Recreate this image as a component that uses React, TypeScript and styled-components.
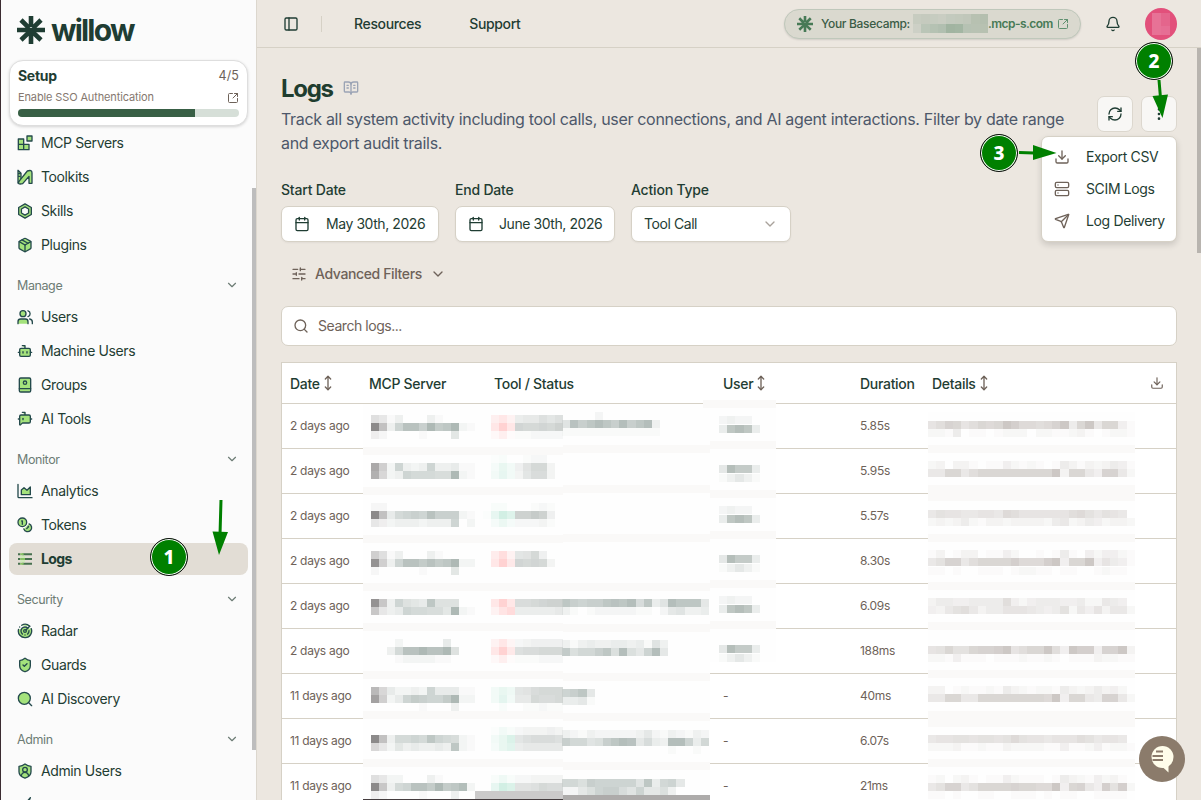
import type { ReactNode } from 'react'
import styled, { createGlobalStyle } from 'styled-components'
import {
    Bell,
    BookOpenText,
    Bot,
    BotMessageSquare,
    Calendar,
    ChevronDown,
    Download,
    EllipsisVertical,
    MoveVertical,
    Package,
    PanelLeft,
    Radar,
    RefreshCw,
    Search,
    Send,
    Server,
    ShieldCheck,
    SlidersHorizontal,
    SquareArrowOutUpRight,
} from 'lucide-react'

const GlobalStyle = createGlobalStyle`
    :root {
        --verde: #1f3d33;
        --marrom: #6e6259;
        --borda: #d6d1c6;
        --fundo: #ece7e0;
    }
    * {
        box-sizing: border-box;
    }
    body {
        margin: 0;
        overflow: hidden;
        background: var(--fundo);
        color: var(--verde);
        font-family: Inter, 'Liberation Sans', sans-serif;
        font-size: 14px;
    }
    svg {
        flex-shrink: 0;
    }
`

const PageStyled = styled.div`
    position: relative;
    display: flex;
    width: 1201px;
    height: 800px;
    overflow: hidden;
`

/* ---------- sidebar ---------- */

const SidebarStyled = styled.aside`
    position: relative;
    width: 257px;
    height: 800px;
    flex-shrink: 0;
    overflow: hidden;
    background: #fbfbfb;
    border-left: 1px solid #3b2c31;
    border-right: 1px solid #dcd7ce;
`
const LogoStyled = styled.div`
    display: flex;
    align-items: center;
    gap: 6px;
    height: 60px;
    padding-left: 16px;
`
const LogoTextStyled = styled.span`
    font-size: 30px;
    font-weight: 700;
    letter-spacing: -1.8px;
    line-height: 30px;
`
const SetupStyled = styled.section`
    height: 66px;
    margin: 0 8px 0 8px;
    padding: 6px 8px 0 8px;
    background: #ffffff;
    border: 1px solid #dedede;
    border-radius: 14px;
    box-shadow: 0 1px 3px rgba(0, 0, 0, 0.16);
`
const SetupRowStyled = styled.div<{ $height: number }>`
    display: flex;
    align-items: center;
    justify-content: space-between;
    height: ${({ $height }) => $height}px;
    color: var(--marrom);

    svg {
        margin-top: 2px;
    }
`
const SetupTitleStyled = styled.strong`
    margin-bottom: 1px;
    color: var(--verde);
    font-size: 14px;
    font-weight: 700;
    letter-spacing: -0.3px;
`
const SetupCountStyled = styled.span`
    font-size: 12.5px;
    line-height: 14px;
    letter-spacing: 0.1px;
`
const SetupHintStyled = styled.span`
    color: #85786f;
    font-size: 11px;
    letter-spacing: -0.13px;
`
const ProgressStyled = styled.div`
    height: 8px;
    overflow: hidden;
    background: #d6dfd8;
    border-radius: 4px;
`
const ProgressBarStyled = styled.div`
    width: 80%;
    height: 100%;
    background: #385f45;
`
const NavStyled = styled.nav`
    display: flex;
    flex-direction: column;
    gap: 2px;
    padding: 1px 8px 0;
`
const NavItemStyled = styled.a<{ $active?: boolean }>`
    display: flex;
    flex-shrink: 0;
    align-items: center;
    gap: 8px;
    height: 32px;
    padding: 0 8px;
    border-radius: 8px;
    background: ${({ $active }) => ($active ? '#e2ddd5' : 'transparent')};
    font-weight: ${({ $active }) => ($active ? 700 : 400)};
    letter-spacing: ${({ $active }) => ($active ? -0.6 : -0.38)}px;
`
const LabelStyled = styled.span`
    margin-bottom: 2px;
`
const NavGroupStyled = styled.div`
    display: flex;
    flex-shrink: 0;
    align-items: center;
    justify-content: space-between;
    height: 32px;
    margin: 6px 0 -2px;
    padding: 0 9px 0 8px;
    color: #6d7c75;
    font-size: 12.5px;
    letter-spacing: -0.4px;
`
const SidebarThumbStyled = styled.div`
    position: absolute;
    top: 188px;
    right: 0;
    width: 4px;
    height: 562px;
    background: #bdbdbd;
`

/* ---------- top bar ---------- */

const MainStyled = styled.main`
    position: relative;
    flex: 1;
    min-width: 0;
`
const TopBarStyled = styled.header`
    display: flex;
    align-items: center;
    height: 48px;
    padding: 0 24px 0 26px;
    border-bottom: 1px solid var(--borda);
`
const TopDividerStyled = styled.span`
    width: 1px;
    height: 16px;
    margin: 0 32px 0 22px;
    background: var(--borda);
`
const TopLinkStyled = styled.a`
    margin-right: 48px;
    font-weight: 500;
    letter-spacing: -0.36px;
`
const BasecampStyled = styled.div`
    display: flex;
    align-items: center;
    width: 297px;
    height: 30px;
    margin-left: auto;
    padding: 0 8px 0 12px;
    background: #dad9cf;
    border: 1px solid #bfc8bb;
    border-radius: 15px;
    box-shadow: 0 1px 2px rgba(0, 0, 0, 0.12);
    color: #3a5c46;
    font-size: 12px;
    font-weight: 500;
    white-space: nowrap;
`
const BasecampLabelStyled = styled.span`
    flex-shrink: 0;
    width: 92px;
    margin-left: 8px;
    letter-spacing: -0.32px;
`
const BasecampHostStyled = styled.span`
    flex-shrink: 0;
    width: 64px;
    margin-right: 5px;
    color: #477a56;
    font-weight: 600;
    letter-spacing: -0.55px;
`
const BellStyled = styled.span`
    display: flex;
    margin: 0 24px 0 24px;
`
const AvatarStyled = styled.div`
    display: flex;
    align-items: center;
    justify-content: center;
    width: 32px;
    height: 32px;
    overflow: hidden;
    background: #e2507b;
    border-radius: 50%;
`

/* ---------- content ---------- */

const ContentStyled = styled.div`
    padding: 26px 24px 0;
`
const HeadingStyled = styled.div`
    display: flex;
    justify-content: space-between;
    height: 82px;
`
const TitleStyled = styled.h1`
    display: flex;
    align-items: center;
    gap: 10px;
    height: 28px;
    margin: 0 0 5px;
    font-size: 24px;
    font-weight: 700;
    letter-spacing: -1.3px;
    color: #1f3d2f;
`
const DescriptionStyled = styled.p`
    margin: 0;
    color: #4d586a;
    font-size: 16px;
    line-height: 24px;
    letter-spacing: -0.32px;
    white-space: nowrap;
`
const ActionsStyled = styled.div`
    display: flex;
    gap: 8px;
    margin-top: 22px;
`
const IconButtonStyled = styled.button`
    display: flex;
    align-items: center;
    justify-content: center;
    width: 36px;
    height: 36px;
    padding: 0;
    background: #f8f7f5;
    border: 1px solid #dcd7ce;
    border-radius: 7px;
    color: var(--verde);
`
const FiltersStyled = styled.div`
    display: flex;
    gap: 16px;
    margin-top: 26px;
`
const FieldStyled = styled.label<{ $width: number }>`
    display: flex;
    flex-direction: column;
    gap: 8px;
    width: ${({ $width }) => $width}px;
    line-height: 16px;
    font-weight: 500;
    letter-spacing: -0.2px;
`
const FieldBoxStyled = styled.span<{ $gap: number }>`
    display: flex;
    align-items: center;
    gap: ${({ $gap }) => $gap}px;
    height: 36px;
    padding: 0 12px;
    background: #ffffff;
    border: 1px solid var(--borda);
    border-radius: 7px;
    box-shadow: 0 1px 2px rgba(0, 0, 0, 0.05);
    font-weight: 400;
    letter-spacing: -0.43px;
    white-space: nowrap;

    > svg:last-child:not(:first-child) {
        margin-left: auto;
    }
`
const AdvancedStyled = styled.div`
    display: flex;
    align-items: center;
    gap: 8px;
    height: 36px;
    margin: 14px 0;
    padding-left: 10px;
    color: var(--marrom);
    font-weight: 500;
    letter-spacing: -0.38px;
`
const SearchStyled = styled.div`
    display: flex;
    align-items: center;
    gap: 9px;
    height: 40px;
    padding-left: 11px;
    background: #ffffff;
    border: 1px solid var(--borda);
    border-radius: 7px;
    color: var(--marrom);
    letter-spacing: -0.45px;
`
const TableStyled = styled.div`
    position: relative;
    height: 460px;
    margin-top: 16px;
    background: #ffffff;
    border: 1px solid var(--borda);
    border-bottom: 0;
`
const TableRowStyled = styled.div<{ $head?: boolean }>`
    display: grid;
    grid-template-columns: 79px 125px 229px 137px 72px 208px 1fr;
    align-items: center;
    height: ${({ $head }) => ($head ? 41 : 45)}px;
    padding: ${({ $head }) => ($head ? '0 0 0 8px' : '0 0 2px 8px')};
    border-bottom: 1px solid var(--borda);
    color: ${({ $head }) => ($head ? 'var(--verde)' : 'var(--marrom)')};
    font-size: ${({ $head }) => ($head ? 14 : 12)}px;
    font-weight: ${({ $head }) => ($head ? 500 : 400)};
    letter-spacing: -0.3px;
    white-space: nowrap;
`
const CellStyled = styled.span`
    display: flex;
    align-items: center;

    svg {
        color: var(--marrom);
    }
`
const ExportCellStyled = styled(CellStyled)`
    justify-content: flex-end;
    padding-right: 12px;
`

/* ---------- floating parts ---------- */

const MenuStyled = styled.ul`
    position: absolute;
    top: 136px;
    left: 784px;
    width: 136px;
    height: 106px;
    margin: 0;
    padding: 4px 0;
    background: #ffffff;
    border: 1px solid var(--borda);
    border-radius: 7px;
    box-shadow: 0 3px 6px rgba(0, 0, 0, 0.14);
    list-style: none;
`
const MenuItemStyled = styled.li`
    display: flex;
    align-items: center;
    gap: 16px;
    height: 32px;
    padding-left: 12px;
    letter-spacing: -0.36px;
    white-space: nowrap;

    svg {
        color: var(--marrom);
    }
`
const PageThumbStyled = styled.div`
    position: absolute;
    top: 48px;
    right: 0;
    width: 4px;
    height: 205px;
    background: #b8b4af;
`
const ChatStyled = styled.button`
    position: absolute;
    top: 736px;
    left: 882px;
    display: flex;
    align-items: center;
    justify-content: center;
    width: 46px;
    height: 46px;
    padding: 0;
    background: #8b7b6b;
    border: 0;
    border-radius: 50%;
`
const MosaicStyled = styled.svg`
    position: absolute;
    top: -1px;
    left: -1px;
`
const ArrowsStyled = styled.svg`
    position: absolute;
    top: 0;
    left: 0;
    pointer-events: none;
`
const StepStyled = styled.div<{ $x: number; $y: number }>`
    position: absolute;
    top: ${({ $y }) => $y - 19}px;
    left: ${({ $x }) => $x - 19}px;
    display: flex;
    align-items: center;
    justify-content: center;
    width: 38px;
    height: 38px;
    background: #008000;
    border: 1px solid #111111;
    border-radius: 50%;
    box-shadow: inset 0 0 0 1px #ffffff;
    color: #ffffff;
    font-family: 'Noto Sans', 'DejaVu Sans', sans-serif;
    font-size: 19px;
    font-weight: 800;
    line-height: 1;
`

/* ---------- icons ---------- */

const lime = '#a4e27c'
const ink = '#244a4c'

function Duo({ children }: { children: ReactNode }) {
    return (
        <svg width="16" height="16" viewBox="0 0 24 24" fill={lime} stroke={ink} strokeWidth="2" strokeLinecap="round" strokeLinejoin="round">
            {children}
        </svg>
    )
}

function LogoMark({ size, color }: { size: number; color: string }) {
    return (
        <svg width={size} height={size} viewBox="0 0 28 28" fill="none" stroke={color} strokeWidth="4.6">
            <path d="M14 0v11M0 14h28M4 4l8.2 8.2M24 4l-8.2 8.2" />
            <path d="M14 28V18M4 24l6.5-6.2q3.5-2.8 7 0L24 24" />
        </svg>
    )
}

const duo = { size: 16, fill: lime, color: ink }

const icons: Record<string, ReactNode> = {
    'MCP Servers': (
        <Duo>
            <path d="M2 6h8v8H2zM2 14h8v8H2zM10 14h8v8h-8zM15 1.500h7.500V9H15z" />
        </Duo>
    ),
    Toolkits: (
        <Duo>
            <path d="M1.500 2v19l4.500-4V6.500zM2 7h2M2 11h2" />
            <path d="M3 18.500 15.500 3Q22.500.5 22.500 6v15.500h-4.500V11L8.500 22Q0 24 3 18.500z" />
        </Duo>
    ),
    Skills: (
        <Duo>
            <path d="M12 1.300 21.500 6.700v10.600L12 22.700 2.500 17.300V6.700z" />
            <path d="M12 5.800 17.400 9v6L12 18.200 6.600 15V9z" fill="#fbfbfb" />
        </Duo>
    ),
    Plugins: <Package {...duo} />,
    Users: (
        <Duo>
            <circle cx="9" cy="7" r="4.500" />
            <path d="M1.500 22v-3q0-4 4-4h7q4 0 4 4v3" />
            <path d="M16.500 2.700a4.500 4.500 0 0 1 0 8.600M19 15q4 1 4 4.500V22" fill="none" />
        </Duo>
    ),
    'Machine Users': <Bot {...duo} />,
    Groups: (
        <Duo>
            <rect x="3.500" y="1.500" width="17" height="21" rx="2" />
            <path d="M3.500 17.500h17" />
            <circle cx="12" cy="8.500" r="2.500" />
        </Duo>
    ),
    'AI Tools': <BotMessageSquare {...duo} />,
    Analytics: (
        <Duo>
            <path d="M1.500 2v18.500q0 1.500 1.500 1.500h19.500" fill="none" />
            <path d="M6.500 17.500v-7l4-3.500 4.500 4 5-5v11.500z" />
        </Duo>
    ),
    Tokens: (
        <Duo>
            <circle cx="8" cy="8" r="6.500" />
            <path d="M7 6h1v5" />
            <path d="M18.100 10.400A6 6 0 1 1 10.300 18M16.700 13.900l.7.700-2.800 2.800" />
        </Duo>
    ),
    Logs: (
        <svg width="16" height="16" viewBox="0 0 24 24" fill="none" strokeWidth="3">
            <path d="M1.500 5h3.500M8 5h14.500M1.500 12h3.500M8 12h14.500M1.500 19h3.500M8 19h14.500" stroke="#47704f" />
            <path d="M5 8.500h7M5 15.500h7" stroke="#cdeab8" />
            <path d="M5 5h5M5 12h7M5 19h5" stroke="#86c163" />
        </svg>
    ),
    Radar: <Radar {...duo} />,
    Guards: <ShieldCheck {...duo} />,
    'AI Discovery': (
        <Duo>
            <circle cx="11" cy="11" r="9" />
            <path d="m18 18 4 4" />
        </Duo>
    ),
    'Admin Users': (
        <Duo>
            <path d="M12 1.500q4 3 9 3.500v8q0 6.500-9 9.700-9-3.200-9-9.700V5q5-.5 9-3.500z" />
            <circle cx="12" cy="10" r="3.500" />
            <path d="M6.500 19q1-5 5.500-5t5.500 5" />
        </Duo>
    ),
    '': (
        <Duo>
            <path d="M20 1 9 14l4 4z" />
        </Duo>
    ),
}

const groups = [
    { title: '', items: ['MCP Servers', 'Toolkits', 'Skills', 'Plugins'] },
    { title: 'Manage', items: ['Users', 'Machine Users', 'Groups', 'AI Tools'] },
    { title: 'Monitor', items: ['Analytics', 'Tokens', 'Logs'] },
    { title: 'Security', items: ['Radar', 'Guards', 'AI Discovery'] },
    { title: 'Admin', items: ['Admin Users', ''] },
]

const logs = [
    { date: '2 days ago', user: '', duration: '5.85s' },
    { date: '2 days ago', user: '', duration: '5.95s' },
    { date: '2 days ago', user: '', duration: '5.57s' },
    { date: '2 days ago', user: '', duration: '8.30s' },
    { date: '2 days ago', user: '', duration: '6.09s' },
    { date: '2 days ago', user: '', duration: '188ms' },
    { date: '11 days ago', user: '-', duration: '40ms' },
    { date: '11 days ago', user: '-', duration: '6.07s' },
    { date: '11 days ago', user: '-', duration: '21ms' },
]

/* ---------- pixelated cells: one hex digit is the strength of one tile ---------- */

type Line = [y: number, tiles: string, status?: 'r' | 'g']

const serverLines: Line[] = [
    [415, '0431300031000000584566979', 'r'],
    [423, '0f839ddafbcf21008f8cbbcbd', 'r'],
    [431, '0210000100050000251112222', 'r'],
    [455, '0000000000000000120012200', 'g'],
    [463, '0b6293239334110037448bb30', 'g'],
    [471, '0a523988877f210048437aa30', 'g'],
    [503, '0110000000000000220001210', 'g'],
    [511, '0f8489a9daaa21018fbddfd40', 'g'],
    [519, '0322333233390200363222310', 'g'],
    [551, '06413000310000006b478b400', 'r'],
    [559, '0e639ddbdbcf22008f7cbcb30', 'r'],
    [567, '0100000100050000000000000', 'r'],
    [599, '0e73965 4c66600008f8aabcdd'.replace(' ', ''), 'r'],
    [607, '0733498877 5f210049c555556'.replace(' ', ''), 'r'],
    [639, '0000200000400000483234444', 'r'],
    [647, '00038ddfddf600008f79aabbb', 'r'],
    [655, '0000122221100000251111222', 'r'],
    [687, '095422329444110047578abbb', 'g'],
    [695, '0c6249ba99bf220049466baab', 'g'],
    [703, '0000000100030000020011211', 'g'],
    [727, '0000000000000000142233343', 'g'],
    [735, '0f838898c987210047c79aaa9', 'g'],
    [743, '053253433 43c210037a566666'.replace(' ', ''), 'g'],
    [775, '0432200031000000252223333', 'g'],
    [783, '0f7389ddbfbce2008fc889baa', 'g'],
    [791, '0210000100030000252333333', 'g'],
]

const toolLines: Line[] = [
    [412, '000020000000'],
    [420, '6ebdfdbfbdf3'],
    [428, '111111111111'],
    [599, 'dbabbdedf8d46fddd5'],
    [607, '310122222110256334'],
    [640, '3134334434163'],
    [648, 'c799bd7f75af5'],
    [689, 'abd5'],
    [697, '4451'],
    [730, '321322222352132132'],
    [738, 'b9967bdfe5843ffa49'],
    [746, '000000000000010010'],
    [779, '997baaaaa6d49a5'],
    [787, '2257abb86a5573'],
]

const userLines: Line[] = [
    [416, '23220'],
    [425, '4dfd4'],
    [465, '5fcc4'],
    [474, '13531'],
    [506, '23220'],
    [515, '4dfd4'],
    [555, '5fcc4'],
    [564, '13531'],
    [596, '23220'],
    [605, '4dfd4'],
    [645, '5fcc4'],
    [654, '13531'],
]

const detailLines: Line[] = [
    [421, '79cb79babfdaa9acf5bf6bb41'],
    [429, '2215011012220221123101221'],
    [461, '2303310114212101531323541'],
    [469, '66bb69bbbbbbbbbf3bb64cc62'],
    [510, '687766776a97777779a868760'],
    [518, '2323521332333325623542332'],
    [550, '1301330114200101510424421'],
    [558, '68cc69bbbbdaaadf4bbf47541'],
    [567, '1101001110122110110012110'],
    [598, '3554455559424555445226540'],
    [606, '4368963557776545826473662'],
    [646, '78b88bccdf79bbf94fdd4ccf3'],
    [654, '2214111011121121011132211'],
    [686, '3301211215321221532353420'],
    [694, '66bb66bbbbbbbbaf4bb65cc62'],
    [735, '6778878878a87767779867760'],
    [743, '2223112113222211411241221'],
    [775, '1202310114211101532142310'],
    [783, '68cc68bbbbcbbaaf4bc64d8d2'],
    [791, '1101001100111010110011110'],
]

function serverTint(i: number, status?: string) {
    if (i < 3) return '#8c8a8a'
    if (i < 15) return '#aeb9b5'
    if (i < 19) return status === 'r' ? '#ffd2d2' : '#d2efe4'
    return '#c6cbc9'
}

interface ITiles {
    lines: Line[]
    x: number
    pitch: number
    tint: (i: number, status?: string) => string
}

function Tiles({ lines, x, pitch, tint }: ITiles) {
    return (
        <>
            {lines.map(([y, tiles, status]) =>
                tiles.split('').map((v, i) => v !== '0' && (
                    <rect
                        key={`${y}-${i}`}
                        x={x + i * pitch}
                        y={y}
                        width={pitch}
                        height={8.4}
                        fill={tint(i, status)}
                        fillOpacity={parseInt(v, 16) / 15}
                    />
                ))
            )}
        </>
    )
}

function Bands({ x, width, ys }: { x: number; width: number; ys: number[] }) {
    return <>{ys.map((y) => <rect key={y} x={x} y={y} width={width} height="8" fill="#faf9f8" />)}</>
}

function Mosaic() {
    return (
        <MosaicStyled width="896" height="438" viewBox="281 362 896 438" shapeRendering="crispEdges">
            <rect x="363" y="404" width="347" height="396" fill="#fefefe" />
            <rect x="703" y="400" width="73" height="262" fill="#fefefe" />
            <rect x="928" y="412" width="207" height="388" fill="#fefefe" />
            <Bands x={563} width={147} ys={[445, 485, 534, 583, 624, 673, 713, 762]} />
            <Bands x={363} width={200} ys={[447, 487, 535, 583, 623, 671, 711, 759]} />
            <Bands x={710} width={66} ys={[441, 490, 531, 580, 621]} />
            <Bands x={703} width={73} ys={[400]} />
            <Bands x={928} width={207} ys={[445, 485, 493, 534, 582, 622, 670, 711, 719, 759]} />
            <Tiles lines={toolLines} x={562} pitch={8.17} tint={() => '#b4bebb'} />
            <Tiles lines={serverLines} x={363} pitch={8} tint={serverTint} />
            <Tiles lines={userLines} x={719} pitch={8.2} tint={() => '#b5beba'} />
            <Tiles lines={detailLines} x={928} pitch={8.28} tint={() => '#cdc8c5'} />
            <rect x="475" y="791" width="88" height="8" fill="#cbcaca" />
            <rect x="563" y="795" width="147" height="5" fill="#adabaa" />
            <rect x="363" y="799" width="200" height="1" fill="#443c3e" />
        </MosaicStyled>
    )
}

function HostMosaic() {
    const colors = [
        ['#c7ccc0', '#c5cabe', '#c6ccc0', '#c9cdc2', '#c3cabe', '#c2c9bc', '#c0c7ba', '#b7c1b1', '#b4bfaf'],
        ['#cdd0c6', '#bac5b7', '#b5c2b3', '#b1bfb0', '#a1b4a1', '#a3b6a3', '#b6c2b3', '#b8c2b3', '#b7c1b1'],
    ]
    return (
        <svg width="75" height="19" viewBox="0 0 75 19" shapeRendering="crispEdges">
            {colors.map((line, row) => line.map((fill, i) => (
                <rect key={`${row}-${i}`} x={i * 8.34} y={row * 10} width="8.34" height="10" fill={fill} />
            )))}
        </svg>
    )
}

function Sidebar() {
    return (
        <SidebarStyled>
            <LogoStyled>
                <LogoMark size={28} color="#1f3d33" />
                <LogoTextStyled>willow</LogoTextStyled>
            </LogoStyled>
            <SetupStyled>
                <SetupRowStyled $height={17}>
                    <SetupTitleStyled>Setup</SetupTitleStyled>
                    <SetupCountStyled>4/5</SetupCountStyled>
                </SetupRowStyled>
                <SetupRowStyled $height={25}>
                    <SetupHintStyled>Enable SSO Authentication</SetupHintStyled>
                    <SquareArrowOutUpRight size={12} />
                </SetupRowStyled>
                <ProgressStyled>
                    <ProgressBarStyled />
                </ProgressStyled>
            </SetupStyled>
            <NavStyled>
                {groups.map(({ title, items }) => [
                    title && (
                        <NavGroupStyled key={title}>
                            {title}
                            <ChevronDown size={14} />
                        </NavGroupStyled>
                    ),
                    ...items.map((item) => (
                        <NavItemStyled key={item} $active={item === 'Logs'}>
                            {icons[item]}
                            <LabelStyled>{item}</LabelStyled>
                        </NavItemStyled>
                    )),
                ])}
            </NavStyled>
            <SidebarThumbStyled />
        </SidebarStyled>
    )
}

function TopBar() {
    return (
        <TopBarStyled>
            <PanelLeft size={16} />
            <TopDividerStyled />
            <TopLinkStyled>Resources</TopLinkStyled>
            <TopLinkStyled>Support</TopLinkStyled>
            <BasecampStyled>
                <LogoMark size={16} color="#477a56" />
                <BasecampLabelStyled>Your Basecamp:</BasecampLabelStyled>
                <HostMosaic />
                <BasecampHostStyled>.mcp-s.com</BasecampHostStyled>
                <SquareArrowOutUpRight size={12} color="#5f9070" />
            </BasecampStyled>
            <BellStyled>
                <Bell size={16} />
            </BellStyled>
            <AvatarStyled>
                <svg width="18" height="22" viewBox="0 0 18 22">
                    <path d="M0 0h9v22H0z" fill="#e77296" />
                    <path d="M9 0h9v13H9z" fill="#e4658c" />
                    <path d="M9 13h9v9H9z" fill="#e66e94" />
                </svg>
            </AvatarStyled>
        </TopBarStyled>
    )
}

function Table() {
    return (
        <TableStyled>
            <TableRowStyled $head>
                <CellStyled>Date <MoveVertical size={16} /></CellStyled>
                <CellStyled>MCP Server</CellStyled>
                <CellStyled>Tool / Status</CellStyled>
                <CellStyled>User <MoveVertical size={16} /></CellStyled>
                <CellStyled>Duration</CellStyled>
                <CellStyled>Details <MoveVertical size={16} /></CellStyled>
                <ExportCellStyled><Download size={14} /></ExportCellStyled>
            </TableRowStyled>
            {logs.map((log, i) => (
                <TableRowStyled key={i}>
                    <CellStyled>{log.date}</CellStyled>
                    <CellStyled />
                    <CellStyled />
                    <CellStyled>{log.user}</CellStyled>
                    <CellStyled>{log.duration}</CellStyled>
                </TableRowStyled>
            ))}
            <Mosaic />
        </TableStyled>
    )
}

function Steps() {
    return (
        <>
            <ArrowsStyled width="1201" height="800" fill="#008000" stroke="#008000" strokeWidth="3">
                <path d="M221 500 220 535M1159 80l1.500 18M1019 152.600l15 .4" />
                <path d="M212.500 531.500 228 532 219 555zM1152.500 96 1168 94.500 1162.500 118zM1033 145 1033 160 1056.500 153z" stroke="none" />
            </ArrowsStyled>
            <StepStyled $x={169} $y={557}>1</StepStyled>
            <StepStyled $x={1154} $y={61}>2</StepStyled>
            <StepStyled $x={999} $y={153}>3</StepStyled>
        </>
    )
}

function App() {
    return (
        <PageStyled>
            <GlobalStyle />
            <Sidebar />
            <MainStyled>
                <TopBar />
                <ContentStyled>
                    <HeadingStyled>
                        <div>
                            <TitleStyled>
                                Logs
                                <BookOpenText size={16} color="#9ba4b5" />
                            </TitleStyled>
                            <DescriptionStyled>
                                Track all system activity including tool calls, user connections, and AI agent interactions. Filter by date range
                                <br />
                                and export audit trails.
                            </DescriptionStyled>
                        </div>
                        <ActionsStyled>
                            <IconButtonStyled><RefreshCw size={16} /></IconButtonStyled>
                            <IconButtonStyled><EllipsisVertical size={16} /></IconButtonStyled>
                        </ActionsStyled>
                    </HeadingStyled>
                    <FiltersStyled>
                        <FieldStyled $width={158}>
                            Start Date
                            <FieldBoxStyled $gap={16}><Calendar size={16} />May 30th, 2026</FieldBoxStyled>
                        </FieldStyled>
                        <FieldStyled $width={160}>
                            End Date
                            <FieldBoxStyled $gap={15}><Calendar size={16} />June 30th, 2026</FieldBoxStyled>
                        </FieldStyled>
                        <FieldStyled $width={160}>
                            Action Type
                            <FieldBoxStyled $gap={0}><span>Tool Call</span><ChevronDown size={16} color="#a9a29b" /></FieldBoxStyled>
                        </FieldStyled>
                    </FiltersStyled>
                    <AdvancedStyled>
                        <SlidersHorizontal size={16} />
                        <LabelStyled>Advanced Filters</LabelStyled>
                        <ChevronDown size={16} />
                    </AdvancedStyled>
                    <SearchStyled>
                        <Search size={16} />
                        <LabelStyled>Search logs...</LabelStyled>
                    </SearchStyled>
                    <Table />
                </ContentStyled>
                <MenuStyled>
                    <MenuItemStyled><Download size={16} /><LabelStyled>Export CSV</LabelStyled></MenuItemStyled>
                    <MenuItemStyled><Server size={16} /><LabelStyled>SCIM Logs</LabelStyled></MenuItemStyled>
                    <MenuItemStyled><Send size={16} /><LabelStyled>Log Delivery</LabelStyled></MenuItemStyled>
                </MenuStyled>
                <PageThumbStyled />
                <ChatStyled>
                    <svg width="24" height="28" viewBox="0 0 24 28">
                        <circle cx="12.500" cy="12" r="11" fill="#fffdea" />
                        <path d="M12 21.500 18.500 27.500 18.500 19z" fill="#fffdea" />
                        <path d="M6 6.500h7M2.500 11h10.500M2.500 15h10.500" stroke="#8b7b6b" strokeWidth="2" />
                    </svg>
                </ChatStyled>
            </MainStyled>
            <Steps />
        </PageStyled>
    )
}

export default App
